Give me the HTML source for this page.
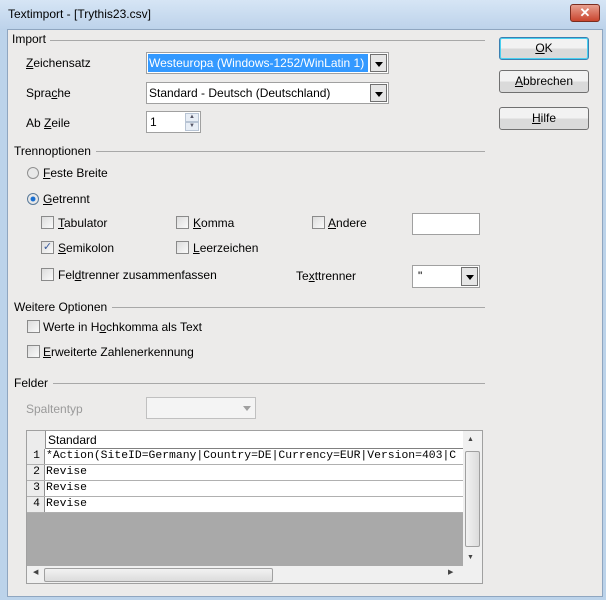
<!DOCTYPE html>
<html><head><style>
*{margin:0;padding:0;box-sizing:border-box}
body{width:606px;height:600px;position:relative;overflow:hidden;background:#bcd3ea;font-family:"Liberation Sans",sans-serif;font-size:12px;color:#000}
.a{position:absolute;white-space:nowrap}
#tb{left:0;top:0;width:606px;height:30px;background:linear-gradient(#d6e5f5,#bcd2ea)}
#ct{left:7px;top:29px;width:596px;height:568px;background:#ecebea;border:1px solid #8fa6c0}
.ln{position:absolute;height:1px;background:#a8a8a8}
.cb{position:absolute;width:13px;height:13px;border:1px solid #8a8a8a;background:linear-gradient(135deg,#dcdcdc,#fafafa)}
.btn{position:absolute;width:90px;height:23px;border:1px solid #707070;border-radius:3px;background:linear-gradient(#f2f2f2 50%,#dadada 50%);text-align:center;line-height:21px}
.combo{position:absolute;background:#fff;border:1px solid #a0a0a0}
.dd{position:absolute;right:1px;top:1px;bottom:1px;width:17px;background:#e6e6e6;border:1px solid #707070}
.dd:after{content:"";position:absolute;left:4px;top:7px;border-left:4px solid transparent;border-right:4px solid transparent;border-top:5px solid #000}
u{text-decoration:underline}
.mono{font-family:"Liberation Mono",monospace;font-size:11.4px}
.row{position:absolute;left:27px;width:436px;height:16px;background:#fff;border-bottom:1px solid #b0b0b0;overflow:hidden}
.rn{position:absolute;left:0;top:0;width:18px;height:16px;background:#ececec;border-right:1px solid #909090;text-align:right;padding-right:4px;line-height:15px}
.rt{position:absolute;left:19px;top:0;line-height:15px}
</style></head><body>
<div id="tb" class="a"></div>
<div class="a" style="left:8px;top:7px;font-size:12px">Textimport - [Trythis23.csv]</div>
<div class="a" style="left:570px;top:4px;width:30px;height:18px;border:1px solid #7a2d20;border-radius:3px;background:linear-gradient(#e8a090,#c9452e);color:#fff;font-weight:bold;text-align:center;line-height:16px;font-size:13px">✕</div>
<div id="ct" class="a"></div>

<div class="a" style="left:12px;top:32px">Import</div><div class="ln" style="left:50px;top:40px;width:435px"></div>
<div class="a" style="left:26px;top:56px"><u>Z</u>eichensatz</div>
<div class="combo" style="left:146px;top:52px;width:243px;height:22px"><div class="a" style="left:1px;top:1px;width:220px;height:18px;background:#3399ff;color:#fff;padding-left:1px;line-height:18px">Westeuropa (Windows-1252/WinLatin 1)</div><div class="dd"></div></div>
<div class="a" style="left:26px;top:86px">Spra<u>c</u>he</div>
<div class="combo" style="left:146px;top:82px;width:243px;height:22px"><div class="a" style="left:2px;top:3px">Standard - Deutsch (Deutschland)</div><div class="dd"></div></div>
<div class="a" style="left:26px;top:116px">Ab <u>Z</u>eile</div>
<div class="combo" style="left:146px;top:111px;width:55px;height:22px"><div class="a" style="left:3px;top:3px">1</div><div class="a" style="right:1px;top:1px;width:14px;height:9px;background:#e8eef6;border:1px solid #b8c4d4;font-size:6px;text-align:center;line-height:7px;color:#556">▲</div><div class="a" style="right:1px;top:10px;width:14px;height:9px;background:#e8eef6;border:1px solid #b8c4d4;font-size:6px;text-align:center;line-height:7px;color:#556">▼</div></div>

<div class="btn" style="left:499px;top:37px;border-color:#3c7fb1;box-shadow:inset 0 0 0 1px #48d0f0"><u>O</u>K</div>
<div class="btn" style="left:499px;top:70px"><u>A</u>bbrechen</div>
<div class="btn" style="left:499px;top:107px"><u>H</u>ilfe</div>

<div class="a" style="left:14px;top:144px">Trennoptionen</div><div class="ln" style="left:96px;top:151px;width:389px"></div>
<div class="a" style="left:27px;top:167px;width:12px;height:12px;border-radius:50%;border:1px solid #909090;background:#e8e8e8"></div>
<div class="a" style="left:43px;top:166px"><u>F</u>este Breite</div>
<div class="a" style="left:27px;top:193px;width:12px;height:12px;border-radius:50%;border:1px solid #5a7a9a;background:radial-gradient(#1a6fd0 30%,#e8e8e8 40%)"></div>
<div class="a" style="left:43px;top:192px"><u>G</u>etrennt</div>
<div class="cb" style="left:41px;top:216px"></div><div class="a" style="left:58px;top:216px"><u>T</u>abulator</div>
<div class="cb" style="left:176px;top:216px"></div><div class="a" style="left:193px;top:216px"><u>K</u>omma</div>
<div class="cb" style="left:312px;top:216px"></div><div class="a" style="left:328px;top:216px"><u>A</u>ndere</div>
<div class="combo" style="left:412px;top:213px;width:68px;height:22px"></div>
<div class="cb" style="left:41px;top:241px;color:#3a5a9a;font-size:11px;line-height:11px;text-align:center">✓</div><div class="a" style="left:58px;top:241px"><u>S</u>emikolon</div>
<div class="cb" style="left:176px;top:241px"></div><div class="a" style="left:193px;top:241px"><u>L</u>eerzeichen</div>
<div class="cb" style="left:41px;top:268px"></div><div class="a" style="left:58px;top:268px">Fel<u>d</u>trenner zusammenfassen</div>
<div class="a" style="left:296px;top:269px">Te<u>x</u>ttrenner</div>
<div class="combo" style="left:412px;top:265px;width:68px;height:23px"><div class="a" style="left:5px;top:3px">"</div><div class="dd"></div></div>

<div class="a" style="left:14px;top:300px">Weitere Optionen</div><div class="ln" style="left:112px;top:307px;width:373px"></div>
<div class="cb" style="left:27px;top:320px"></div><div class="a" style="left:43px;top:320px">Werte in H<u>o</u>chkomma als Text</div>
<div class="cb" style="left:27px;top:345px"></div><div class="a" style="left:43px;top:345px"><u>E</u>rweiterte Zahlenerkennung</div>

<div class="a" style="left:14px;top:376px">Felder</div><div class="ln" style="left:53px;top:383px;width:432px"></div>
<div class="a" style="left:26px;top:402px;color:#9a9a9a">Spaltentyp</div>
<div class="combo" style="left:146px;top:397px;width:110px;height:22px;border-color:#c0c0c0;background:#f4f4f4"><div class="a" style="right:4px;top:8px;border-left:4px solid transparent;border-right:4px solid transparent;border-top:5px solid #a0a0a0"></div></div>

<div class="a" style="left:26px;top:430px;width:457px;height:154px;border:1px solid #a0a0a0;background:#f0f0f0"></div>
<div class="a" style="left:27px;top:431px;width:436px;height:18px;background:#fff;border-bottom:1px solid #808080"></div>
<div class="a" style="left:27px;top:431px;width:19px;height:18px;background:#ececec;border-right:1px solid #909090"></div>
<div class="a" style="left:48px;top:433px">Standard</div>
<div class="row mono" style="top:449px"><div class="rn">1</div><div class="rt">*Action(SiteID=Germany|Country=DE|Currency=EUR|Version=403|C</div></div>
<div class="row mono" style="top:465px"><div class="rn">2</div><div class="rt">Revise</div></div>
<div class="row mono" style="top:481px"><div class="rn">3</div><div class="rt">Revise</div></div>
<div class="row mono" style="top:497px"><div class="rn">4</div><div class="rt">Revise</div></div>
<div class="a" style="left:27px;top:513px;width:436px;height:53px;background:#a9a9a9"></div>
<div class="a" style="left:463px;top:431px;width:19px;height:135px;background:#f0f0f0"></div>
<div class="a" style="left:465px;top:451px;width:15px;height:96px;border:1px solid #a0a0a0;border-radius:2px;background:linear-gradient(90deg,#f2f2f2,#dcdcdc)"></div>
<div class="a" style="left:467px;top:436px;font-size:7px;color:#444">▲</div>
<div class="a" style="left:467px;top:554px;font-size:7px;color:#444">▼</div>
<div class="a" style="left:44px;top:568px;width:229px;height:14px;border:1px solid #a0a0a0;border-radius:2px;background:linear-gradient(#f2f2f2,#dcdcdc)"></div>
<div class="a" style="left:33px;top:568px;font-size:7px;color:#444">◀</div>
<div class="a" style="left:448px;top:568px;font-size:7px;color:#444">▶</div>
</body></html>
